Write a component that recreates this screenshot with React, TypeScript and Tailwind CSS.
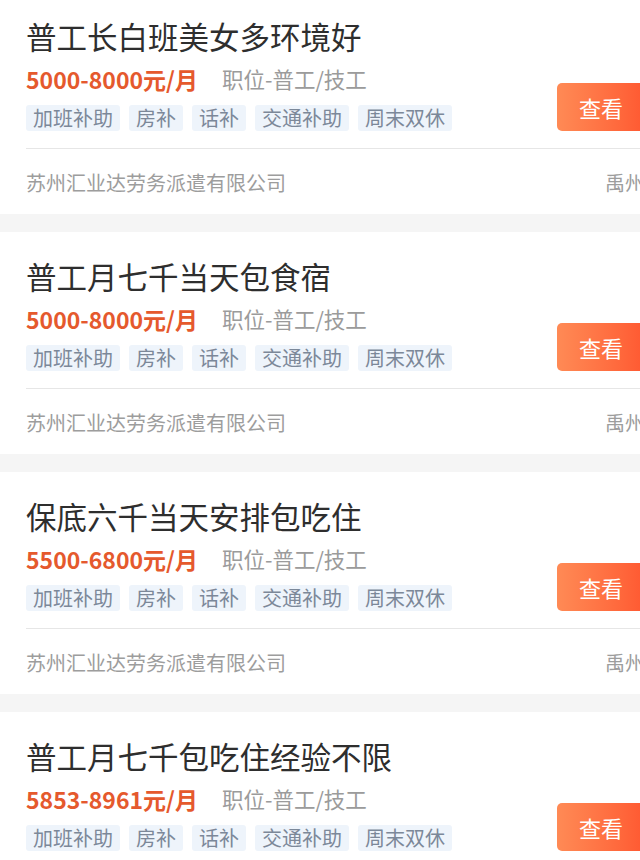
import React from "react";

type Job = { title: string; salary: string };

const jobs: Job[] = [
  { title: "普工长白班美女多环境好", salary: "5000-8000元/月" },
  { title: "普工月七千当天包食宿", salary: "5000-8000元/月" },
  { title: "保底六千当天安排包吃住", salary: "5500-6800元/月" },
  { title: "普工月七千包吃住经验不限", salary: "5853-8961元/月" },
];

const tags = ["加班补助", "房补", "话补", "交通补助", "周末双休"];

const font = { fontFamily: '"Noto Sans CJK SC", "Noto Sans", sans-serif' };

function Card({ job }: { job: Job }) {
  return (
    <div className="w-[680px] bg-white pl-[26px] pr-[33px] pt-[24px] pb-[16px]">
      <div className="flex items-end border-b border-[#e6e6e6] pb-[17px]">
        <div className="flex w-[531px] flex-col">
          <div className="text-[30.5px] leading-[40px] text-[#2e2e2e]">{job.title}</div>
          <div className="mt-[8px] flex items-center">
            <span className="text-[23px] font-bold leading-[30px] text-[#e5592d]">{job.salary}</span>
            <span className="ml-[24px] text-[21.5px] leading-[30px] text-[#9b9b9b]">职位-普工/技工</span>
          </div>
          <div className="mt-[11px] flex gap-[9px]">
            {tags.map((t) => (
              <span
                key={t}
                className="rounded-[3px] bg-[#eef4fb] px-[7px] text-[20px] leading-[26px] text-[#7c8899]"
              >
                {t}
              </span>
            ))}
          </div>
        </div>
        <button className="flex h-[48px] w-[90px] items-center justify-center rounded-[5px] bg-gradient-to-r from-[#ff8a55] to-[#ff5730] text-[22px] text-white">
          <span className="-ml-[2px]">查看</span>
        </button>
      </div>
      <div className="mt-[19px] flex items-center text-[20px] leading-[30px] text-[#9d9d9d]">
        <span>苏州汇业达劳务派遣有限公司</span>
        <span className="ml-auto mr-[2px]">禹州</span>
      </div>
    </div>
  );
}

export default function App() {
  return (
    <div className="h-[860px] w-[640px] overflow-hidden bg-[#f5f5f5]" style={font}>
      <div className="-mt-[8px] flex flex-col gap-[18px]">
        {jobs.map((j, i) => (
          <Card key={i} job={j} />
        ))}
      </div>
    </div>
  );
}
